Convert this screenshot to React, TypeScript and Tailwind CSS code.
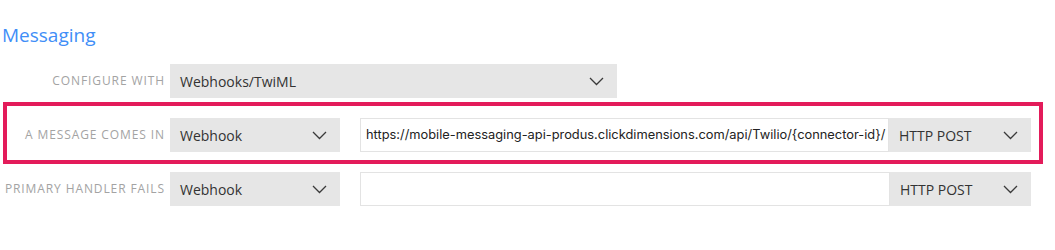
import React from "react";

function Chevron() {
  return (
    <svg width="15" height="9" viewBox="0 0 15 9" fill="none" className="shrink-0">
      <path d="M1 1 L7.5 7.5 L14 1" stroke="#3a3a3a" strokeWidth="1.3" />
    </svg>
  );
}

function Select({ value, className }: { value: string; className: string }) {
  return (
    <div
      className={`h-[34px] bg-[#e6e6e6] flex items-center justify-between pl-[10px] pr-[13px] text-[14px] text-[#333333] ${className}`}
    >
      <span>{value}</span>
      <Chevron />
    </div>
  );
}

function Label({ text, className }: { text: string; className: string }) {
  return (
    <div
      className={`shrink-0 text-right text-[12px] tracking-[0.9px] text-[#a3a3a3] uppercase leading-none ${className}`}
    >
      {text}
    </div>
  );
}

export default function App() {
  const url =
    "https://mobile-messaging-api-produs.clickdimensions.com/api/Twilio/{connector-id}/";
  return (
    <div className="w-[1055px] h-[250px] bg-white font-['Open_Sans',sans-serif] overflow-hidden">
      <div className="pt-[23px] pl-[2px] text-[19px] leading-[24px] text-[#3f8ef7]">
        Messaging
      </div>

      <div className="mt-[17px] flex items-center">
        <Label text="Configure with" className="w-[165px]" />
        <Select value="Webhooks/TwiML" className="ml-[5px] w-[447px]" />
      </div>

      <div className="mt-[4px] ml-[3px] w-[1040px] border-4 border-[#e31b5a] pt-[12px] pb-[8px]">
        <div className="flex items-center">
          <Label text="A message comes in" className="w-[158px]" />
          <Select value="Webhook" className="ml-[5px] w-[170px]" />
          <div className="ml-[20px] w-[529px] h-[34px] border border-[#e3e3e3] bg-white flex items-center pl-[5px] text-[12.85px] text-[#222222] font-['Inter',sans-serif] whitespace-nowrap overflow-hidden">
            {url}
          </div>
          <Select value="HTTP POST" className="w-[142px]" />
        </div>
      </div>

      <div className="mt-[8px] flex items-center">
        <Label text="Primary handler fails" className="w-[165px]" />
        <Select value="Webhook" className="ml-[5px] w-[170px]" />
        <div className="ml-[20px] w-[530px] h-[34px] border border-[#e3e3e3] bg-white" />
        <Select value="HTTP POST" className="w-[141px]" />
      </div>
    </div>
  );
}
